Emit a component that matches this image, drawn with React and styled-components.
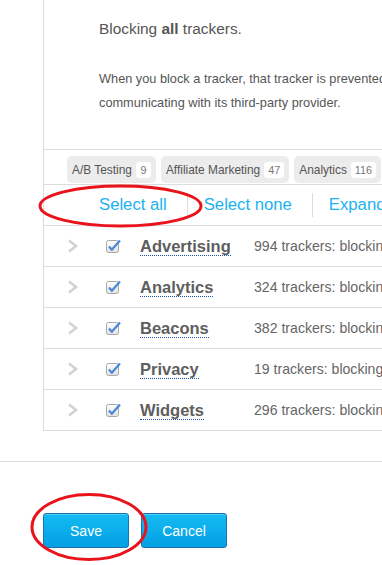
import React from 'react'
import styled, { createGlobalStyle } from 'styled-components'

const GlobalStyle = createGlobalStyle`
  html, body {
    margin: 0;
    padding: 0;
    background: #fff;
    overflow: hidden;
  }
  body {
    font-family: "Liberation Sans", Arial, sans-serif;
    color: #555;
  }
`

const Page = styled.div`
  position: relative;
  width: 382px;
  height: 565px;
  overflow: hidden;
`

const Panel = styled.div`
  margin-left: 43px;
  width: 760px;
  border-left: 1px solid #dcdcdc;
  border-bottom: 1px solid #dcdcdc;
`

const Intro = styled.div`
  height: 150px;
  padding: 19px 0 0 55px;
  box-sizing: border-box;
  border-bottom: 1px solid #dcdcdc;
  h2 {
    margin: 0;
    font-size: 15.4px;
    line-height: 20px;
    font-weight: normal;
    color: #555;
    b {
      font-weight: bold;
    }
  }
  p {
    margin: 28px 0 0;
    font-size: 12.75px;
    line-height: 24px;
    color: #555;
  }
`

const Tags = styled.div`
  display: flex;
  gap: 5px;
  padding: 6px 0 0 23px;
  height: 35px;
  box-sizing: border-box;
  border-bottom: 1px solid #dcdcdc;
`

const Tag = styled.span`
  display: flex;
  align-items: center;
  gap: 4px;
  height: 27px;
  padding: 0 5px 0 5px;
  background: #ececec;
  border-radius: 5px;
  font-size: 11.9px;
  color: #555;
  white-space: nowrap;
  flex-shrink: 0;
`

const Count = styled.span`
  display: inline-flex;
  align-items: center;
  justify-content: center;
  min-width: 15px;
  height: 16px;
  padding: 0 4px;
  box-sizing: border-box;
  background: #fff;
  border-radius: 3px;
  font-size: 10.8px;
  color: #777;
`

const Actions = styled.div`
  display: flex;
  align-items: center;
  height: 40px;
  padding-left: 39px;
  border-bottom: 1px solid #dcdcdc;
`

const ActionLink = styled.a`
  padding: 0 20px 0 16px;
  font-size: 16.7px;
  line-height: 24px;
  color: #1bb2ee;
  white-space: nowrap;
  border-right: ${p => (p.$last ? 'none' : '1px solid #dcdcdc')};
`

const Row = styled.div`
  display: flex;
  align-items: center;
  height: 40px;
  border-bottom: ${p => (p.$last ? 'none' : '1px solid #dcdcdc')};
  white-space: nowrap;
`

const Chevron = styled.span`
  display: flex;
  width: 38px;
  margin-left: 23px;
  svg {
    display: block;
  }
`

const Check = styled.span`
  display: flex;
  width: 35px;
  svg {
    display: block;
  }
`

const NameCell = styled.span`
  width: 114px;
  flex-shrink: 0;
`

const Name = styled.span`
  font-size: 16.5px;
  font-weight: bold;
  color: #5e5e5e;
  border-bottom: 1px dotted #1c4fa8;
`

const Desc = styled.span`
  font-size: 14.1px;
  color: #666;
`

const Footer = styled.div`
  margin-top: 30px;
  border-top: 1px solid #dcdcdc;
  padding: 51px 0 0 43px;
  display: flex;
  gap: 12px;
`

const Button = styled.button`
  width: 86px;
  height: 35px;
  border: 1px solid #1a72b0;
  border-radius: 3px;
  background: linear-gradient(#14bbf2, #03a0e4);
  color: #fff;
  font-family: "Liberation Sans", Arial, sans-serif;
  font-size: 14px;
  padding: 0;
  box-shadow: inset 0 1px 0 rgba(255, 255, 255, 0.25);
`

const Annotation = styled.svg`
  position: absolute;
  left: 0;
  top: 0;
  pointer-events: none;
`

const tags = [
  ['A/B Testing', 9],
  ['Affiliate Marketing', 47],
  ['Analytics', 116],
  ['Audio/Video Player', 88],
]

const categories = [
  ['Advertising', '994 trackers: blocking all'],
  ['Analytics', '324 trackers: blocking all'],
  ['Beacons', '382 trackers: blocking all'],
  ['Privacy', '19 trackers: blocking all'],
  ['Widgets', '296 trackers: blocking all'],
]

function ChevronIcon() {
  return (
    <svg width="12" height="14" viewBox="0 0 12 14">
      <path d="M2 1.5 L9 7 L2 12.5" fill="none" stroke="#d2d2d2" strokeWidth="2.6" />
    </svg>
  )
}

function CheckIcon() {
  return (
    <svg width="16" height="15" viewBox="0 0 16 15">
      <defs>
        <linearGradient id="cb" x1="0" y1="0" x2="0" y2="1">
          <stop offset="0" stopColor="#ffffff" />
          <stop offset="1" stopColor="#e2e2e2" />
        </linearGradient>
      </defs>
      <rect x="1.5" y="1.5" width="12" height="12" rx="2" fill="url(#cb)" stroke="#a8a8a8" />
      <path d="M4 7.5 L6.8 10.8 L15 1.5" fill="none" stroke="#4a88d8" strokeWidth="2.2" strokeLinejoin="round" />
    </svg>
  )
}

function App() {
  return (
    <Page>
      <GlobalStyle />
      <Panel>
        <Intro>
          <h2>Blocking <b>all</b> trackers.</h2>
          <p>
            When you block a tracker, that tracker is prevented from<br />
            communicating with its third-party provider.
          </p>
        </Intro>
        <Tags>
          {tags.map(([label, n]) => (
            <Tag key={label}>
              {label}
              <Count>{n}</Count>
            </Tag>
          ))}
        </Tags>
        <Actions>
          <ActionLink>Select all</ActionLink>
          <ActionLink>Select none</ActionLink>
          <ActionLink $last>Expand all</ActionLink>
        </Actions>
        {categories.map(([name, desc], i) => (
          <Row key={name} $last={i === categories.length - 1}>
            <Chevron><ChevronIcon /></Chevron>
            <Check><CheckIcon /></Check>
            <NameCell><Name>{name}</Name></NameCell>
            <Desc>{desc}</Desc>
          </Row>
        ))}
      </Panel>
      <Footer>
        <Button>Save</Button>
        <Button>Cancel</Button>
      </Footer>
      <Annotation width="382" height="565">
        <ellipse cx="120.5" cy="206" rx="80.5" ry="20" fill="none" stroke="#e8131b" strokeWidth="3" />
        <ellipse cx="89" cy="527" rx="57" ry="32.5" fill="none" stroke="#e8131b" strokeWidth="3" />
      </Annotation>
    </Page>
  )
}

export default App
